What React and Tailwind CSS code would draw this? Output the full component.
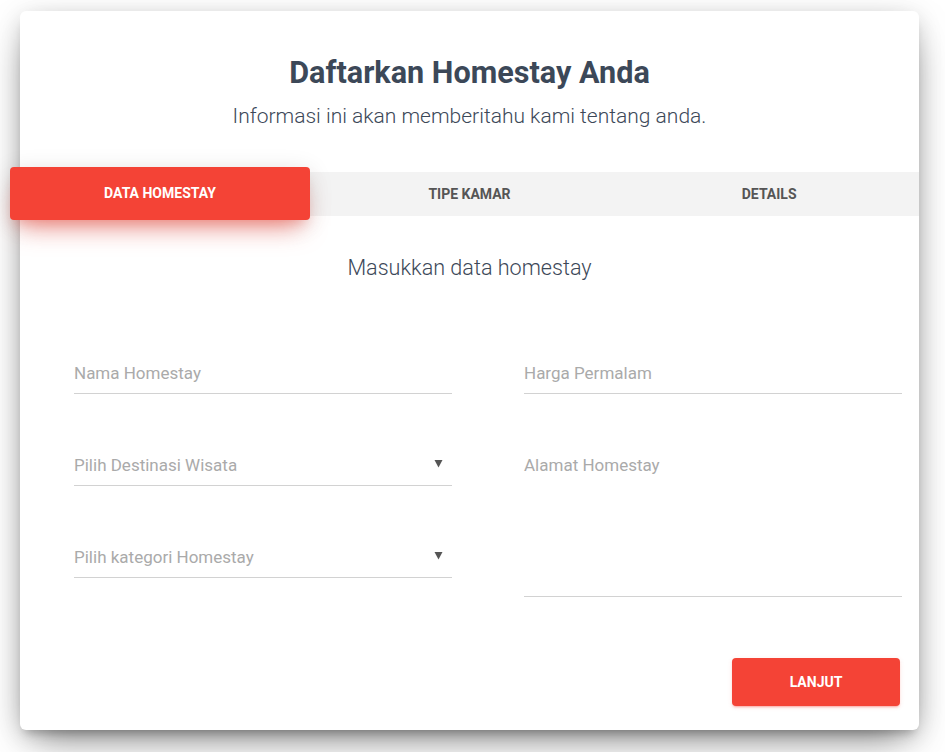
import React from 'react';

const Caret = () => (
    <svg width="9" height="9" viewBox="0 0 9 9" className="mr-[9px] mb-[3px]">
        <polygon points="0.5,1 8.5,1 4.5,8.5" fill="#555555" />
    </svg>
);

const Field = ({ label, select }) => (
    <div className="flex items-center justify-between pt-[16px] pb-[10px] border-b border-[#d2d2d2]">
        <span className="block text-[17px] leading-[20px] text-[#aaaaaa]">{label}</span>
        {select && <Caret />}
    </div>
);

const App = () => {
    const tabs = ['', 'Tipe Kamar', 'Details'];

    return (
        <div className="min-h-screen bg-white pt-[11px] pl-[20px] font-['Roboto',sans-serif]">
            <div className="w-[899px] rounded-[6px] bg-white shadow-[0_16px_38px_-12px_rgba(0,0,0,0.56),0_4px_25px_0_rgba(0,0,0,0.12),0_8px_10px_-5px_rgba(0,0,0,0.2)]">
                {/* header */}
                <div className="pt-[45px] text-center text-[#3c4858]">
                    <h3 className="text-[30.6px] leading-[34px] font-bold">Daftarkan Homestay Anda</h3>
                    <h5 className="mt-[12px] text-[21px] leading-[28px] font-light">Informasi ini akan memberitahu kami tentang anda.</h5>
                </div>

                {/* tabs */}
                <div className="relative mt-[42px] grid grid-cols-3 h-[44px] bg-[#f3f3f3]">
                    {tabs.map((tab, i) => (
                        <div key={i} className="flex items-center justify-center text-[14px] font-bold uppercase text-[#555555]">
                            {tab}
                        </div>
                    ))}
                    <div className="absolute left-[-10px] top-[-5px] w-[300px] h-[53px] flex items-center justify-center rounded-[4px] bg-[#f44336] text-[14px] font-bold uppercase text-white shadow-[0_16px_26px_-10px_rgba(244,67,54,0.56),0_4px_25px_0_rgba(0,0,0,0.12),0_8px_10px_-5px_rgba(244,67,54,0.2)]">
                        Data Homestay
                    </div>
                </div>

                {/* content */}
                <h4 className="mt-[38px] text-center text-[21.6px] leading-[28px] font-light text-[#3c4858]">Masukkan data homestay</h4>

                <div className="mt-[65px] grid grid-cols-[378px_378px] gap-x-[72px] pl-[54px]">
                    <div className="flex flex-col gap-[45px]">
                        <Field label="Nama Homestay" />
                        <Field label="Pilih Destinasi Wisata" select />
                        <Field label="Pilih kategori Homestay" select />
                    </div>
                    <div className="flex flex-col gap-[45px]">
                        <Field label="Harga Permalam" />
                        <div className="h-[158px] pt-[16px] border-b border-[#d2d2d2]">
                            <span className="block text-[17px] leading-[20px] text-[#aaaaaa]">Alamat Homestay</span>
                        </div>
                    </div>
                </div>

                <div className="flex justify-end pr-[19px] pt-[61px] pb-[24px]">
                    <button className="w-[168px] h-[48px] rounded-[4px] bg-[#f44336] text-[14px] font-bold uppercase text-white shadow-[0_2px_2px_0_rgba(244,67,54,0.14),0_3px_1px_-2px_rgba(244,67,54,0.2),0_1px_5px_0_rgba(244,67,54,0.12)]">
                        Lanjut
                    </button>
                </div>
            </div>
        </div>
    );
};

export default App;
